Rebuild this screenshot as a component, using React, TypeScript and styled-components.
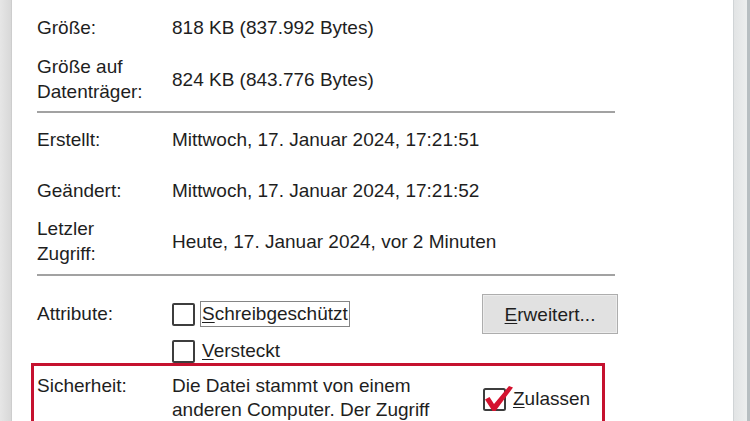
import React from "react";
import styled, { createGlobalStyle } from "styled-components";

const GlobalStyle = createGlobalStyle`
  html, body {
    margin: 0;
    padding: 0;
    background: #ffffff;
  }
  body {
    width: 750px;
    height: 421px;
    overflow: hidden;
    font-family: "Liberation Sans", Arial, sans-serif;
  }
`;

const Window = styled.div`
  display: flex;
  width: 750px;
  height: 421px;
  overflow: hidden;
  color: #1e1e1e;
  font-size: 19px;
  line-height: 25px;
`;

const LeftEdge = styled.div`
  flex: none;
  width: 11px;
  background: linear-gradient(to right, #e6e6e6, #d8d8d8);
  border-right: 1px solid #cdcdcd;
`;

const RightEdge = styled.div`
  flex: none;
  width: 13px;
  background: linear-gradient(to right, #e2e4e5, #eceeee);
  border-left: 1px solid #d0d4d6;
  border-right: 3px solid #b7bec1;
`;

const Sheet = styled.div`
  flex: 1;
  display: flex;
  flex-direction: column;
  padding-left: 25px;

  & > * {
    flex-shrink: 0;
  }
`;

const InfoRow = styled.div<{ $h: number }>`
  display: grid;
  grid-template-columns: 135px 1fr;
  align-items: center;
  height: ${(p) => p.$h}px;
`;

const Label = styled.div`
  line-height: 25px;
`;

const Value = styled.div`
  white-space: nowrap;
`;

const Divider = styled.div<{ $top: number; $bottom: number }>`
  width: 578px;
  height: 2px;
  background: #a2a2a2;
  margin: ${(p) => p.$top}px 0 ${(p) => p.$bottom}px;
`;

const AttrGrid = styled.div`
  display: grid;
  grid-template-columns: 135px 1fr 136px;
  width: 581px;
  padding-top: 18px;
`;

const AttrLabel = styled.div`
  padding-top: 8px;
  line-height: 24px;
`;

const CheckList = styled.div`
  display: flex;
  flex-direction: column;
  gap: 13px;
  padding-top: 8px;
`;

const CheckItem = styled.div`
  display: flex;
  align-items: center;
  gap: 5px;
  height: 24px;
`;

const Box = styled.span`
  box-sizing: border-box;
  width: 23px;
  height: 23px;
  border: 2px solid #3d3d3d;
  border-radius: 2px;
  background: #fff;
`;

const CheckText = styled.span<{ $focus?: boolean }>`
  padding: 0 1px;
  line-height: 24px;
  border: 1px solid ${(p) => (p.$focus ? "#858585" : "transparent")};
`;

const Key = styled.span`
  text-decoration: underline;
  text-decoration-thickness: 1px;
  text-underline-offset: 2px;
`;

const Button = styled.div`
  box-sizing: border-box;
  height: 40px;
  display: flex;
  align-items: center;
  justify-content: center;
  background: #e1e1e1;
  border: 1px solid #adadad;
  box-shadow: inset 0 0 0 1px #ececec;
`;

const SecurityFrame = styled.div`
  flex: 1 0 auto;
  box-sizing: border-box;
  width: 574px;
  margin-left: -6px;
  padding: 8px 0 0 3px;
  border: 3px solid #c5112f;
  border-bottom: none;
  display: grid;
  grid-template-columns: 135px 311px auto;
  align-items: start;
  line-height: 24px;
`;

const SecurityText = styled.div`
  white-space: nowrap;
`;

const AllowItem = styled.div`
  display: flex;
  align-items: center;
  margin-top: 11px;
`;

const CheckedBox = () => (
  <svg width="30" height="28" viewBox="0 0 30 28">
    <rect x="1" y="4" width="21" height="21" rx="1.5" fill="#fff" stroke="#3d3d3d" strokeWidth="2" />
    <path d="M2 14.5 L6.5 12 L11 19 L26 1 L30 2.5 L12.5 26 L9.5 26 Z" fill="#d4132f" />
  </svg>
);

export default function App() {
  return (
    <>
      <GlobalStyle />
      <Window>
        <LeftEdge />
        <Sheet>
          <InfoRow $h={54}>
            <Label>Größe:</Label>
            <Value>818 KB (837.992 Bytes)</Value>
          </InfoRow>
          <InfoRow $h={50}>
            <Label>
              Größe auf
              <br />
              Datenträger:
            </Label>
            <Value>824 KB (843.776 Bytes)</Value>
          </InfoRow>
          <Divider $top={7} $bottom={1} />
          <InfoRow $h={50}>
            <Label>Erstellt:</Label>
            <Value>Mittwoch, 17. Januar 2024, 17:21:51</Value>
          </InfoRow>
          <InfoRow $h={52}>
            <Label>Geändert:</Label>
            <Value>Mittwoch, 17. Januar 2024, 17:21:52</Value>
          </InfoRow>
          <InfoRow $h={50}>
            <Label>
              Letzler
              <br />
              Zugriff:
            </Label>
            <Value>Heute, 17. Januar 2024, vor 2 Minuten</Value>
          </InfoRow>
          <Divider $top={8} $bottom={0} />
          <AttrGrid>
            <AttrLabel>Attribute:</AttrLabel>
            <CheckList>
              <CheckItem>
                <Box />
                <CheckText $focus>
                  <Key>S</Key>chreibgeschützt
                </CheckText>
              </CheckItem>
              <CheckItem>
                <Box />
                <CheckText>
                  <Key>V</Key>ersteckt
                </CheckText>
              </CheckItem>
            </CheckList>
            <Button>
              <span>
                <Key>E</Key>rweitert...
              </span>
            </Button>
          </AttrGrid>
          <SecurityFrame>
            <div>Sicherheit:</div>
            <SecurityText>
              Die Datei stammt von einem
              <br />
              anderen Computer. Der Zugriff
            </SecurityText>
            <AllowItem>
              <CheckedBox />
              <span>
                <Key>Z</Key>ulassen
              </span>
            </AllowItem>
          </SecurityFrame>
        </Sheet>
        <RightEdge />
      </Window>
    </>
  );
}
